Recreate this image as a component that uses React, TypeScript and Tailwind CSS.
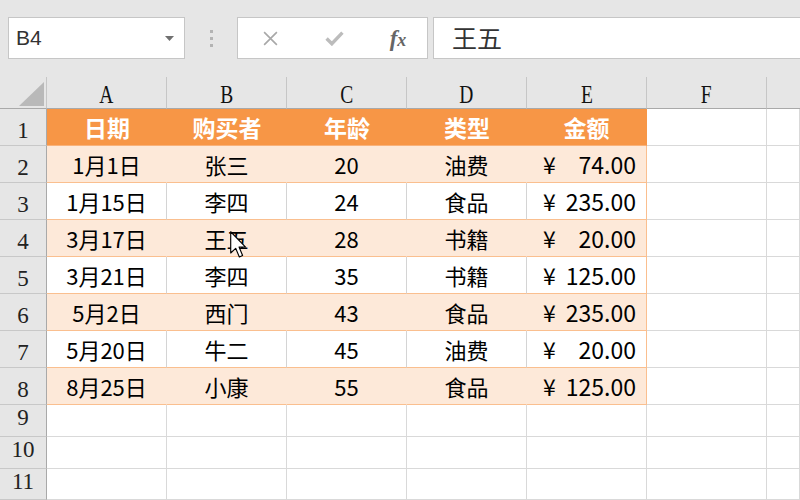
const cols = ['A', 'B', 'C', 'D', 'E', 'F'];

const headers = ['日期', '购买者', '年龄', '类型', '金额'];

const rows = [
	['1月1日', '张三', '20', '油费', '74.00'],
	['1月15日', '李四', '24', '食品', '235.00'],
	['3月17日', '王五', '28', '书籍', '20.00'],
	['3月21日', '李四', '35', '书籍', '125.00'],
	['5月2日', '西门', '43', '食品', '235.00'],
	['5月20日', '牛二', '45', '油费', '20.00'],
	['8月25日', '小康', '55', '食品', '125.00'],
];

const cjk = "font-['Noto_Sans_CJK_SC','Noto_Sans',sans-serif]";
const serif = "font-['Liberation_Serif','DejaVu_Serif',serif]";

function RowHead({ n, tall }: { n: number; tall: boolean }) {
	return (
		<div
			className={`flex justify-center border-r border-r-[#a9a9a9] border-b border-b-[#c8c8c8] bg-[#e6e6e6] text-[23px] text-[#222] ${serif} ${
				tall ? 'items-center pt-[8px]' : 'items-center pb-[4px]'
			}`}
		>
			{n}
		</div>
	);
}

function EmptyCells({ count }: { count: number }) {
	return (
		<>
			{Array.from({ length: count }).map((_, i) => (
				<div key={i} className='bg-white border-r border-b border-[#d9d9d9]' />
			))}
		</>
	);
}

export default function App() {
	return (
		<div className={`relative w-[800px] h-[500px] overflow-hidden bg-[#e6e6e6] ${cjk}`}>
			{/* formula bar */}
			<div className='flex h-[77px] pt-[17px] pb-[18px] pl-[8px]'>
				<div className='flex items-center justify-between w-[177px] bg-white border border-[#c6c6c6] pl-[7px] pr-[10px]'>
					<span className="font-['Liberation_Sans',Arial,sans-serif] text-[21px] text-[#333]">B4</span>
					<svg width='9' height='5' viewBox='0 0 9 5'>
						<path d='M0 0 L9 0 L4.5 5 Z' fill='#707070' />
					</svg>
				</div>
				<div className='flex flex-col items-center justify-center gap-[4px] w-[52px]'>
					<span className='w-[3px] h-[3px] bg-[#b3b3b3]' />
					<span className='w-[3px] h-[3px] bg-[#b3b3b3]' />
					<span className='w-[3px] h-[3px] bg-[#b3b3b3]' />
				</div>
				<div className='flex items-center w-[191px] bg-white border border-[#c6c6c6]'>
					<div className='flex justify-center w-[64px]'>
						<svg width='17' height='17' viewBox='0 0 16 16'>
							<path d='M2 2 L14 14 M14 2 L2 14' stroke='#a8a8a8' strokeWidth='1.5' />
						</svg>
					</div>
					<div className='flex justify-center w-[64px]'>
						<svg width='19' height='15' viewBox='0 0 18 14'>
							<path d='M1.5 7 L6.5 12 L16.5 1.5' stroke='#bcbcbc' strokeWidth='3.2' fill='none' />
						</svg>
					</div>
					<div className='flex justify-center w-[60px] pl-[4px]'>
						<span className={`italic font-bold text-[23px] leading-none text-[#666] ${serif}`}>
							f<span className='text-[18px]'>x</span>
						</span>
					</div>
				</div>
				<div className='flex items-center flex-1 ml-[5px] bg-white border border-r-0 border-[#c6c6c6] pl-[18px]'>
					<span className='text-[25px] text-[#333]'>王五</span>
				</div>
			</div>

			{/* sheet */}
			<div className='grid grid-cols-[47px_repeat(6,120px)_33px] grid-rows-[32px_repeat(8,37px)_32px_32px_31px]'>
				{/* column headers */}
				<div className='relative border-r border-r-[#c6c6c6] border-b border-b-[#a9a9a9] bg-[#e6e6e6]'>
					<svg className='absolute left-[19px] top-[5px]' width='25' height='24' viewBox='0 0 25 24'>
						<path d='M25 0 L25 24 L0 24 Z' fill='#b9b9b9' />
					</svg>
				</div>
				{cols.map((c) => (
					<div
						key={c}
						className={`flex items-center justify-center pt-[3px] border-r border-r-[#c6c6c6] border-b border-b-[#a9a9a9] bg-[#e6e6e6] text-[26px] text-[#111] ${serif}`}
					>
						<span className='inline-block scale-x-75'>{c}</span>
					</div>
				))}
				<div className='border-b border-b-[#a9a9a9] bg-[#e6e6e6]' />

				{/* row 1 */}
				<RowHead n={1} tall />
				{headers.map((h, i) => (
					<div
						key={h}
						className={`flex items-center justify-center bg-[#f79646] border-b border-b-[#f9b27a] text-[23px] font-bold text-white ${
							i === 4 ? 'border-r border-r-[#f79646]' : ''
						}`}
					>
						{h}
					</div>
				))}
				<EmptyCells count={2} />

				{/* data rows */}
				{rows.map((r, ri) => {
					const shaded = ri % 2 === 0;
					const bg = shaded ? 'bg-[#fde9d9]' : 'bg-white';
					const sep = shaded ? 'border-r-[#fde9d9]' : 'border-r-[#d4d4d4]';
					return (
						<div key={ri} className='contents'>
							<RowHead n={ri + 2} tall />
							{r.slice(0, 4).map((v, ci) => (
								<div
									key={ci}
									className={`flex items-center justify-center border-r border-b border-b-[#fabf8f] ${sep} ${bg} text-[22px] text-black`}
								>
									{v}
								</div>
							))}
							<div
								className={`flex items-center justify-between pl-[16px] pr-[10px] border-r border-r-[#fabf8f] border-b border-b-[#fabf8f] ${bg} text-[23px] text-black`}
							>
								<span>¥</span>
								<span>{r[4]}</span>
							</div>
							<EmptyCells count={2} />
						</div>
					);
				})}

				{/* empty rows */}
				{[9, 10, 11].map((n) => (
					<div key={n} className='contents'>
						<RowHead n={n} tall={false} />
						<EmptyCells count={7} />
					</div>
				))}
			</div>

			{/* mouse cursor */}
			<svg className='absolute left-[230px] top-[231px]' width='17' height='27' viewBox='0 0 12 19'>
				<path
					d='M0.5 0.5 L0.5 15.5 L4 12.2 L6.6 18.3 L8.9 17.3 L6.4 11.3 L11 11.3 Z'
					fill='white'
					stroke='black'
					strokeWidth='0.8'
					strokeLinejoin='round'
				/>
			</svg>
		</div>
	);
}
